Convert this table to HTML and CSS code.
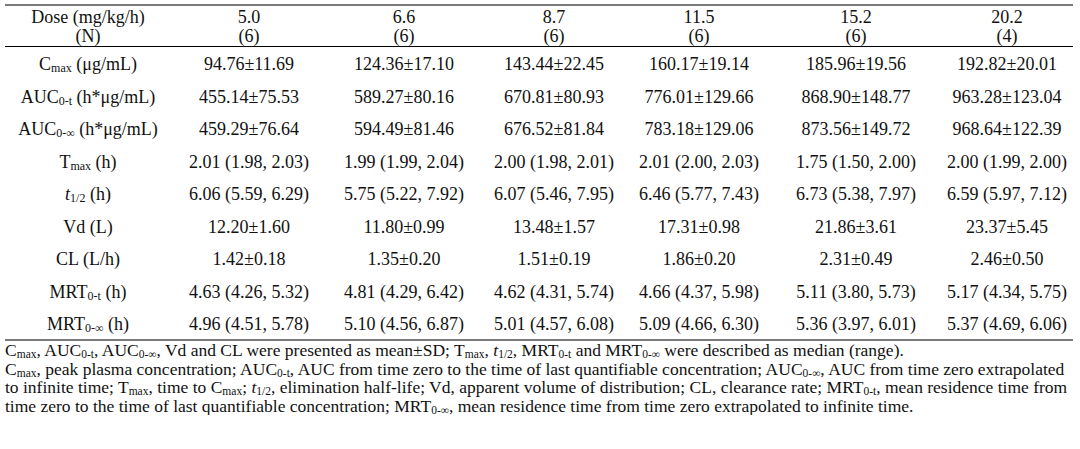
FILE: index.html
```html
<!DOCTYPE html>
<html>
<head>
<meta charset="utf-8">
<link rel="stylesheet" href="styles.css">
</head>
<body>
<div class="page">
<table class="pk">
  <colgroup>
    <col class="c0"><col class="c1"><col class="c2"><col class="c3"><col class="c4"><col class="c5"><col class="c6">
  </colgroup>
  <thead>
    <tr>
      <th>Dose (mg/kg/h)<br>(N)</th>
      <th>5.0<br>(6)</th>
      <th>6.6<br>(6)</th>
      <th>8.7<br>(6)</th>
      <th>11.5<br>(6)</th>
      <th>15.2<br>(6)</th>
      <th>20.2<br>(4)</th>
    </tr>
  </thead>
  <tbody>
    <tr class="first">
      <td>C<sub>max</sub> (μg/mL)</td>
      <td>94.76±11.69</td><td>124.36±17.10</td><td>143.44±22.45</td><td>160.17±19.14</td><td>185.96±19.56</td><td>192.82±20.01</td>
    </tr>
    <tr>
      <td>AUC<sub>0-t</sub> (h*μg/mL)</td>
      <td>455.14±75.53</td><td>589.27±80.16</td><td>670.81±80.93</td><td>776.01±129.66</td><td>868.90±148.77</td><td>963.28±123.04</td>
    </tr>
    <tr>
      <td>AUC<sub>0-∞</sub> (h*μg/mL)</td>
      <td>459.29±76.64</td><td>594.49±81.46</td><td>676.52±81.84</td><td>783.18±129.06</td><td>873.56±149.72</td><td>968.64±122.39</td>
    </tr>
    <tr>
      <td>T<sub>max</sub> (h)</td>
      <td>2.01 (1.98, 2.03)</td><td>1.99 (1.99, 2.04)</td><td>2.00 (1.98, 2.01)</td><td>2.01 (2.00, 2.03)</td><td>1.75 (1.50, 2.00)</td><td>2.00 (1.99, 2.00)</td>
    </tr>
    <tr>
      <td><i>t</i><sub>1/2</sub> (h)</td>
      <td>6.06 (5.59, 6.29)</td><td>5.75 (5.22, 7.92)</td><td>6.07 (5.46, 7.95)</td><td>6.46 (5.77, 7.43)</td><td>6.73 (5.38, 7.97)</td><td>6.59 (5.97, 7.12)</td>
    </tr>
    <tr>
      <td>Vd (L)</td>
      <td>12.20±1.60</td><td>11.80±0.99</td><td>13.48±1.57</td><td>17.31±0.98</td><td>21.86±3.61</td><td>23.37±5.45</td>
    </tr>
    <tr>
      <td>CL (L/h)</td>
      <td>1.42±0.18</td><td>1.35±0.20</td><td>1.51±0.19</td><td>1.86±0.20</td><td>2.31±0.49</td><td>2.46±0.50</td>
    </tr>
    <tr>
      <td>MRT<sub>0-t</sub> (h)</td>
      <td>4.63 (4.26, 5.32)</td><td>4.81 (4.29, 6.42)</td><td>4.62 (4.31, 5.74)</td><td>4.66 (4.37, 5.98)</td><td>5.11 (3.80, 5.73)</td><td>5.17 (4.34, 5.75)</td>
    </tr>
    <tr class="last">
      <td>MRT<sub>0-∞</sub> (h)</td>
      <td>4.96 (4.51, 5.78)</td><td>5.10 (4.56, 6.87)</td><td>5.01 (4.57, 6.08)</td><td>5.09 (4.66, 6.30)</td><td>5.36 (3.97, 6.01)</td><td>5.37 (4.69, 6.06)</td>
    </tr>
  </tbody>
</table>
<div class="notes">
  <p>C<sub>max</sub>, AUC<sub>0-t</sub>, AUC<sub>0-∞</sub>, Vd and CL were presented as mean±SD; T<sub>max</sub>, <i>t</i><sub>1/2</sub>, MRT<sub>0-t</sub> and MRT<sub>0-∞</sub> were described as median (range).</p>
  <p>C<sub>max</sub>, peak plasma concentration; AUC<sub>0-t</sub>, AUC from time zero to the time of last quantifiable concentration; AUC<sub>0-∞</sub>, AUC from time zero extrapolated to infinite time; T<sub>max</sub>, time to C<sub>max</sub>; <i>t</i><sub>1/2</sub>, elimination half-life; Vd, apparent volume of distribution; CL, clearance rate; MRT<sub>0-t</sub>, mean residence time from time zero to the time of last quantifiable concentration; MRT<sub>0-∞</sub>, mean residence time from time zero extrapolated to infinite time.</p>
</div>
</div>
</body>
</html>
```

FILE: styles.css
```css
html, body {
  margin: 0;
  padding: 0;
  background: #ffffff;
}
body {
  font-family: "Liberation Serif", "Times New Roman", serif;
  color: #111111;
}
.page {
  padding: 4px 7px 0 5px;
}
.pk {
  width: 1068px;
  border-collapse: collapse;
  table-layout: fixed;
  font-size: 18px;
}
.c0 { width: 166px; }
.c1 { width: 156px; }
.c2 { width: 154px; }
.c3 { width: 146px; }
.c4 { width: 144px; }
.c5 { width: 170px; }
.c6 { width: 132px; }
.pk thead tr {
  border-top: 2px solid #7a7a7a;
  border-bottom: 1.5px solid #000000;
}
.pk th {
  font-weight: normal;
  line-height: 19px;
  padding: 2px 0 0;
  text-align: center;
}
.pk td {
  text-align: center;
  line-height: 20px;
  padding: 6px 0 6.5px;
  white-space: nowrap;
}
.pk tr.first td {
  padding-top: 7px;
}
.pk tr.last td {
  padding-bottom: 5px;
}
.pk tbody tr.last {
  border-bottom: 2px solid #7a7a7a;
}
sub {
  font-size: 12px;
  vertical-align: -2px;
  line-height: 0;
}
.notes {
  font-size: 17.5px;
  line-height: 18.5px;
  padding-top: 0;
}
.notes sub {
  font-size: 11.5px;
}
.notes p {
  margin: 0;
}
```
